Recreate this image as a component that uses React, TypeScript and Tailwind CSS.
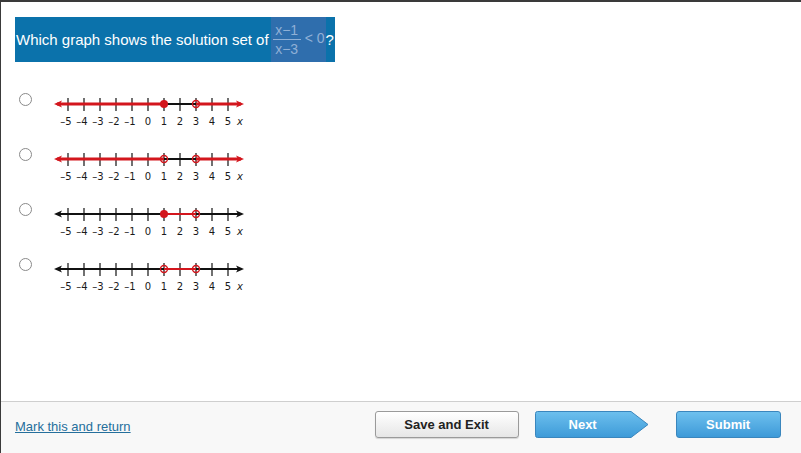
import type { ReactNode } from "react";

type Dot = "open" | "closed";

interface LineSpec {
	base: "red-rays" | "black";
	left: Dot;
}

const RED = "#d3161d";
const BLACK = "#111111";

// tick k sits at x0 + k * step inside the svg
const X0 = 97;
const STEP = 16;
const AXIS_Y = 10;

function tx(k: number) {
	return X0 + k * STEP;
}

function Arrow({ side, color }: { side: "left" | "right"; color: string }) {
	if (side === "left") {
		return <polygon points="3,10 11,6.5 9,10 11,13.5" fill={color} />;
	}
	return <polygon points="193,10 185,6.5 187,10 185,13.5" fill={color} />;
}

function Marker({ k, dot }: { k: number; dot: Dot }) {
	if (dot === "closed") {
		return <circle cx={tx(k)} cy={AXIS_Y} r={4} fill={RED} />;
	}
	return (
		<circle
			cx={tx(k)}
			cy={AXIS_Y}
			r={3.5}
			fill="none"
			stroke={RED}
			strokeWidth={1.4}
		/>
	);
}

function NumberLine({ spec }: { spec: LineSpec }) {
	const ticks = [-5, -4, -3, -2, -1, 0, 1, 2, 3, 4, 5];
	const redRays = spec.base === "red-rays";
	return (
		<svg width="200" height="34" viewBox="0 0 200 34" className="block">
			{/* axis */}
			<line
				x1={6}
				y1={AXIS_Y}
				x2={190}
				y2={AXIS_Y}
				stroke={BLACK}
				strokeWidth={2}
			/>
			{ticks.map((k) => (
				<line
					key={k}
					x1={tx(k)}
					y1={4}
					x2={tx(k)}
					y2={17}
					stroke={BLACK}
					strokeWidth={1.2}
				/>
			))}
			{redRays ? (
				<>
					<line
						x1={6}
						y1={AXIS_Y}
						x2={tx(1)}
						y2={AXIS_Y}
						stroke={RED}
						strokeWidth={3}
					/>
					<line
						x1={tx(3)}
						y1={AXIS_Y}
						x2={190}
						y2={AXIS_Y}
						stroke={RED}
						strokeWidth={3}
					/>
					<Arrow side="left" color={RED} />
					<Arrow side="right" color={RED} />
				</>
			) : (
				<>
					<line
						x1={tx(1)}
						y1={AXIS_Y}
						x2={tx(3)}
						y2={AXIS_Y}
						stroke={RED}
						strokeWidth={2}
					/>
					<Arrow side="left" color={BLACK} />
					<Arrow side="right" color={BLACK} />
				</>
			)}
			<Marker k={1} dot={spec.left} />
			<Marker k={3} dot="open" />
			<g
				fontFamily="'DejaVu Sans', Verdana, sans-serif"
				fontSize="10"
				fill="#1a1a1a"
			>
				{ticks.map((k) => (
					<text
						key={k}
						x={k < 0 ? tx(k) - 2 : tx(k)}
						y={31}
						textAnchor="middle"
					>
						{k < 0 ? `\u2013${-k}` : k}
					</text>
				))}
				<text x={189} y={31} textAnchor="middle" fontStyle="italic">
					x
				</text>
			</g>
		</svg>
	);
}

function Choice({ children }: { children: ReactNode }) {
	return (
		<div className="flex h-[55px] items-start">
			<span className="mt-[-1px] ml-[18px] h-[13px] w-[13px] rounded-full border border-[#8a8a8a] bg-white" />
			<div className="ml-[19px]">{children}</div>
		</div>
	);
}

const CHOICES: LineSpec[] = [
	{ base: "red-rays", left: "closed" },
	{ base: "red-rays", left: "open" },
	{ base: "black", left: "closed" },
	{ base: "black", left: "open" },
];

export default function App() {
	return (
		<div
			className="flex h-[453px] w-[801px] flex-col border-t-2 border-l border-[#3a3a3a] bg-white"
			style={{ fontFamily: "'Liberation Sans', Arial, sans-serif" }}
		>
			<div className="flex-1">
				<div className="mt-[15px] ml-[14px] flex h-[45px] w-[320px] items-stretch whitespace-nowrap bg-[#0b72ab] text-white">
					<span className="shrink-0 self-center pl-px text-[15px] leading-none">
						Which graph shows the solution set of
					</span>
					<span className="ml-[2px] flex shrink-0 items-center bg-[#2f6ead] pr-[1px] pl-[2px] text-[#8fb0d6]">
						<span className="flex flex-col items-center text-[14px] leading-[18px]">
							<span className="px-[1px]">x−1</span>
							<span className="h-px w-[28px] bg-[#8fb0d6]" />
							<span className="px-[1px]">x−3</span>
						</span>
						<span className="mb-[3px] ml-[4px] text-[14px]">
							&lt; 0
						</span>
					</span>
					<span className="shrink-0 self-center text-[15px] leading-none">
						?
					</span>
				</div>
				<div className="mt-[32px]">
					{CHOICES.map((spec) => (
						<Choice key={`${spec.base}-${spec.left}`}>
							<NumberLine spec={spec} />
						</Choice>
					))}
				</div>
			</div>
			<div className="flex h-[52px] items-start border-t border-[#cfcfcf] bg-[#f8f8f8]">
				<a
					href="#mark"
					className="mt-[15px] ml-[14px] text-[13px] text-[#256f9c] underline"
				>
					Mark this and return
				</a>
				<button
					type="button"
					className="mt-[9px] ml-[244px] h-[27px] w-[144px] rounded-[3px] border border-[#9a9a9a] bg-gradient-to-b from-white to-[#e6e6e6] text-[13px] font-bold text-[#222] shadow-[0_1px_1px_rgba(0,0,0,0.15)]"
				>
					Save and Exit
				</button>
				<div className="relative mt-[9px] ml-[16px] h-[27px] w-[114px]">
					<svg
						width="114"
						height="27"
						viewBox="0 0 114 27"
						className="absolute inset-0"
					>
						<defs>
							<linearGradient id="nextFill" x1="0" y1="0" x2="0" y2="1">
								<stop offset="0" stopColor="#6dc0ee" />
								<stop offset="1" stopColor="#3d9ad8" />
							</linearGradient>
						</defs>
						<path
							d="M2.5 0.5 H96 L113 13.5 L96 26.5 H2.5 Q0.5 26.5 0.5 24.5 V2.5 Q0.5 0.5 2.5 0.5 Z"
							fill="url(#nextFill)"
							stroke="#3a86bd"
						/>
					</svg>
					<span className="relative flex h-full w-[96px] items-center justify-center text-[13px] font-bold text-white">
						Next
					</span>
				</div>
				<button
					type="button"
					className="mt-[9px] ml-[27px] h-[27px] w-[105px] rounded-[3px] border border-[#3a86bd] bg-gradient-to-b from-[#6dc0ee] to-[#3d9ad8] text-[13px] font-bold text-white"
				>
					Submit
				</button>
			</div>
		</div>
	);
}
